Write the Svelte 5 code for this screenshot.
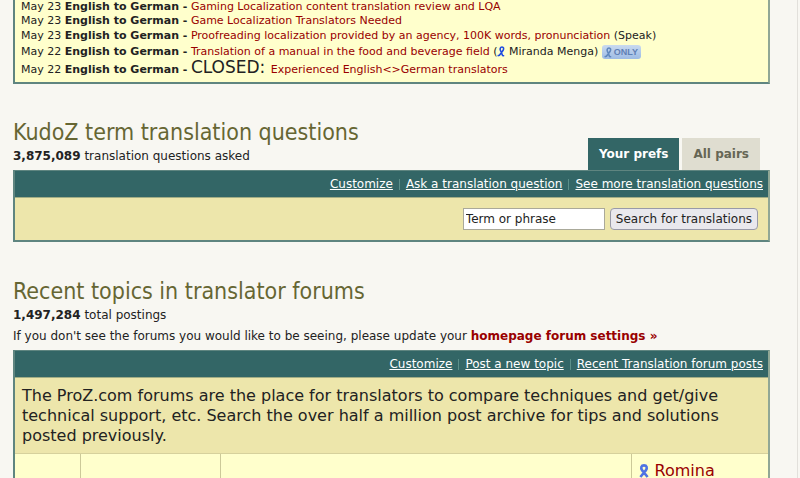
<script lang="ts">
    type Job = {
        date: string;
        pair: string;
        title: string;
        closed?: boolean;
        note?: string;
        author?: string;
    };

    const jobs: Job[] = [
        { date: 'May 23', pair: 'English to German', title: 'Gaming Localization content translation review and LQA' },
        { date: 'May 23', pair: 'English to German', title: 'Game Localization Translators Needed' },
        {
            date: 'May 23',
            pair: 'English to German',
            title: 'Proofreading localization provided by an agency, 100K words, pronunciation',
            note: '(Speak)'
        },
        {
            date: 'May 22',
            pair: 'English to German',
            title: 'Translation of a manual in the food and beverage field',
            author: 'Miranda Menga'
        },
        { date: 'May 22', pair: 'English to German', title: 'Experienced English<>German translators', closed: true }
    ];

    const kudozLinks = ['Customize', 'Ask a translation question', 'See more translation questions'];
    const forumLinks = ['Customize', 'Post a new topic', 'Recent Translation forum posts'];

    let tab = $state('Your prefs');
    let term = $state('Term or phrase');
</script>

{#snippet ribbon(color: string, width: number, height: number)}
    <svg class="ribbon" {width} {height} viewBox="0 0 10 14" fill="none" stroke={color} aria-hidden="true">
        <path d="M1.4 13 L6.8 6.4 C8.6 3.8 7.8 1.4 5 1.4 C2.2 1.4 1.4 3.8 3.2 6.4 L8.6 13" stroke-width="2.6" />
    </svg>
{/snippet}

<!-- small slanted ribbon used next to member names in the job list -->
{#snippet slantedRibbon(color: string)}
    <svg class="ribbon" width="8" height="11" viewBox="0 0 8 11" fill="none" stroke={color} aria-hidden="true">
        <path d="M0.6 9.8 L2.4 9.2 L6 4.6 C7.2 2.6 6.6 1 5 1 C3.2 1 2.6 2.8 3.6 4.8 L5.6 9.6 L7.2 9.8" stroke-width="1.6" />
    </svg>
{/snippet}

{#snippet linkBar(links: string[])}
    <nav class="bar">
        {#each links as link, i}
            {#if i > 0}<span class="sep"></span>{/if}
            <a href="#top">{link}</a>
        {/each}
    </nav>
{/snippet}

<div class="page">
    <ul class="panel jobs">
        {#each jobs as job}
            <li class:with-badge={job.author} class:is-closed={job.closed}>
                {job.date} <b>{job.pair} -</b>
                {#if job.closed}<span class="closed">CLOSED:</span>{/if}
                <a href="#job">{job.title}</a>
                {#if job.note}{job.note}{/if}
                {#if job.author}
                    ({@render slantedRibbon('#1f4ce0')} {job.author})
                    <span class="badge">{@render slantedRibbon('#5f87bd')}ONLY</span>
                {/if}
            </li>
        {/each}
    </ul>

    <section class="kudoz">
        <header>
            <div>
                <h2>KudoZ term translation questions</h2>
                <p class="count"><b>3,875,089</b> translation questions asked</p>
            </div>
            <div class="tabs">
                {#each ['Your prefs', 'All pairs'] as name}
                    <button class:active={tab === name} onclick={() => (tab = name)}>{name}</button>
                {/each}
            </div>
        </header>
        <div class="panel">
            {@render linkBar(kudozLinks)}
            <form class="search" onsubmit={(e) => e.preventDefault()}>
                <input type="text" aria-label="Term or phrase" bind:value={term} />
                <button type="submit">Search for translations</button>
            </form>
        </div>
    </section>

    <section class="forums">
        <h2>Recent topics in translator forums</h2>
        <p class="count"><b>1,497,284</b> total postings</p>
        <p class="hint">
            If you don't see the forums you would like to be seeing, please update your
            <a href="#settings">homepage forum settings »</a>
        </p>
        <div class="panel">
            {@render linkBar(forumLinks)}
            <table>
                <colgroup>
                    <col class="c-icon" />
                    <col class="c-forum" />
                    <col />
                    <col class="c-poster" />
                </colgroup>
                <tbody>
                    <tr>
                        <td class="intro" colspan="4">
                            The ProZ.com forums are the place for translators to compare techniques and get/give
                            technical support, etc. Search the over half a million post archive for tips and solutions
                            posted previously.
                        </td>
                    </tr>
                    <tr class="topic">
                        <td></td>
                        <td></td>
                        <td></td>
                        <td>{@render ribbon('#4f74e3', 10, 14)} <a href="#poster">Romina</a></td>
                    </tr>
                </tbody>
            </table>
        </div>
    </section>
</div>

<style>
    :global(body) {
        background: #f8f7f2;
        overflow: hidden;
    }

    .page {
        height: 100vh;
        overflow: hidden;
        margin-right: 2px;
        padding: 0 27px 0 13px;
        box-sizing: border-box;
        border-right: 1px solid #e2e0db;
        font-family: Verdana, "DejaVu Sans", sans-serif;
        font-size: 12px;
        line-height: 15px;
        color: #222;
    }

    a {
        color: #990000;
        text-decoration: none;
    }

    h2 {
        margin: 0;
        font-family: Tahoma, "DejaVu Sans Condensed", "DejaVu Sans", sans-serif;
        font-stretch: condensed;
        font-size: 23px;
        line-height: 30px;
        font-weight: normal;
        color: #666633;
    }

    p {
        margin: 0;
    }

    .panel {
        border: 2px solid #5f8580;
        border-top-width: 1px;
        border-right-color: #90a795;
    }

    .jobs {
        list-style: none;
        margin: 0;
        padding: 0 6px 4px;
        border-top: 0;
        background: #ffffcc;
        font-size: 11px;
        white-space: nowrap;
    }

    .jobs li:first-child {
        line-height: 13px;
    }

    .jobs .with-badge {
        line-height: 17px;
    }

    .jobs .is-closed {
        line-height: 17px;
    }

    .closed {
        font-size: 17px;
        line-height: 15px;
        margin-right: 2px;
    }

    .ribbon {
        vertical-align: -2px;
    }

    .badge {
        display: inline-flex;
        align-items: center;
        gap: 2px;
        height: 14px;
        padding: 0 3px 0 2px;
        border-radius: 3px;
        background: linear-gradient(#c9daf0, #9dbbe4);
        color: #5f80b5;
        font-family: "Liberation Sans", Arial, sans-serif;
        font-size: 9px;
        line-height: 14px;
        font-weight: bold;
        vertical-align: middle;
    }

    .kudoz {
        margin-top: 33px;
    }

    .kudoz header {
        display: flex;
        justify-content: space-between;
        align-items: flex-end;
    }

    .count {
        padding: 2px 0 6px;
    }

    .tabs {
        display: flex;
        gap: 3px;
        margin-right: 10px;
    }

    .tabs button {
        height: 32px;
        padding: 0 11px;
        border: 0;
        background: #dfddd0;
        color: #666655;
        font: bold 12px Verdana, "DejaVu Sans", sans-serif;
    }

    .tabs button.active {
        background: #336666;
        color: #fff;
    }

    .bar {
        display: flex;
        justify-content: flex-end;
        align-items: center;
        height: 26px;
        padding-right: 5px;
        background: #336666;
        border-bottom: 1px solid #a3ae85;
    }

    .bar a {
        color: #fff;
        text-decoration: underline;
    }

    .sep {
        width: 1px;
        height: 11px;
        margin: 0 6px;
        background: #5c8f8a;
    }

    .search {
        display: flex;
        justify-content: flex-end;
        align-items: center;
        gap: 5px;
        padding: 10px;
        background: #ede6ab;
    }

    .search input,
    .search button {
        box-sizing: border-box;
        height: 22px;
        font: 12px Verdana, "DejaVu Sans", sans-serif;
        color: #222;
    }

    .search input {
        width: 142px;
        padding: 0 2px;
        border: 1px solid #aaa99a;
        background: #fff;
    }

    .search button {
        padding: 0 5px;
        border: 1px solid #999aa8;
        border-radius: 4px;
        background: #e9e8ed;
    }

    .forums {
        margin-top: 34px;
    }

    .hint {
        padding-bottom: 6px;
    }

    .hint a {
        font-weight: bold;
    }

    table {
        width: 100%;
        table-layout: fixed;
        border-collapse: collapse;
        font-size: 16px;
        line-height: 20px;
    }

    .c-icon {
        width: 65px;
    }

    .c-forum {
        width: 140px;
    }

    .c-poster {
        width: 136px;
    }

    td {
        padding: 7px;
        background: #ffffcc;
    }

    .intro {
        padding: 8px 7px 7px;
        background: #ede6ab;
        border-bottom: 1px solid #d6d19c;
    }

    .topic td + td {
        border-left: 1px solid #ccc999;
    }

    .topic td {
        height: 60px;
        vertical-align: top;
    }
</style>
